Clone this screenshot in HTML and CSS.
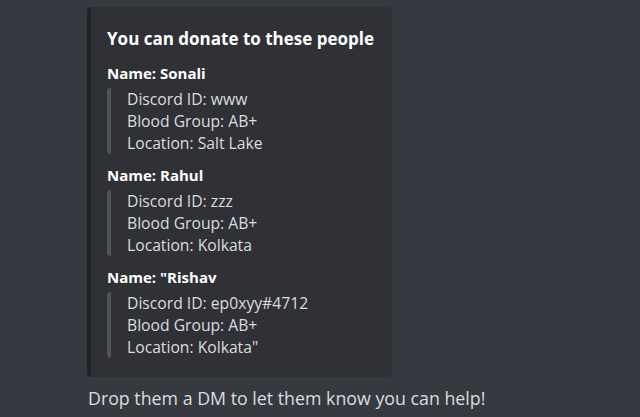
FILE: index.html
```html
<!DOCTYPE html>
<html>
<head>
<meta charset="utf-8">
<link rel="stylesheet" href="styles.css">
</head>
<body>
<div class="message">
  <div class="embed">
    <div class="title">You can donate to these people</div>
    <div class="field">
      <div class="field-name">Name: Sonali</div>
      <div class="quote">
        <div>Discord ID: www</div>
        <div>Blood Group: AB+</div>
        <div>Location: Salt Lake</div>
      </div>
    </div>
    <div class="field">
      <div class="field-name">Name: Rahul</div>
      <div class="quote">
        <div>Discord ID: zzz</div>
        <div>Blood Group: AB+</div>
        <div>Location: Kolkata</div>
      </div>
    </div>
    <div class="field">
      <div class="field-name">Name: "Rishav</div>
      <div class="quote">
        <div>Discord ID: ep0xyy#4712</div>
        <div>Blood Group: AB+</div>
        <div>Location: Kolkata"</div>
      </div>
    </div>
  </div>
  <div class="content">Drop them a DM to let them know you can help!</div>
</div>
</body>
</html>
```
FILE: styles.css
```css
html, body {
  margin: 0;
  padding: 0;
  background: #36393f;
  height: 100%;
}
body {
  font-family: "Open Sans", "Noto Sans", sans-serif;
  color: #dcddde;
}
.message {
  padding: 7px 0 0 87px;
}
.embed {
  background: #2f3136;
  border-left: 4px solid #202225;
  border-radius: 4px;
  padding: 21px 0 19px 16px;
  width: 285px;
}
.title {
  font-size: 17px;
  font-weight: 700;
  line-height: 22px;
  color: #ffffff;
  margin-bottom: 14px;
}
.field {
  margin-top: 12px;
}
.field:first-of-type { margin-top: 0; }
.field-name {
  font-size: 15px;
  font-weight: 700;
  line-height: 18px;
  color: #ffffff;
  margin-bottom: 6px;
}
.quote {
  border-left: 4px solid #4f545c;
  border-radius: 4px;
  padding-left: 16px;
  font-size: 15.7px;
  line-height: 22px;
  color: #dcddde;
}
.content {
  margin-top: 9px;
  font-size: 17.8px;
  line-height: 24px;
  color: #dcddde;
  margin-left: 1px;
}
```
